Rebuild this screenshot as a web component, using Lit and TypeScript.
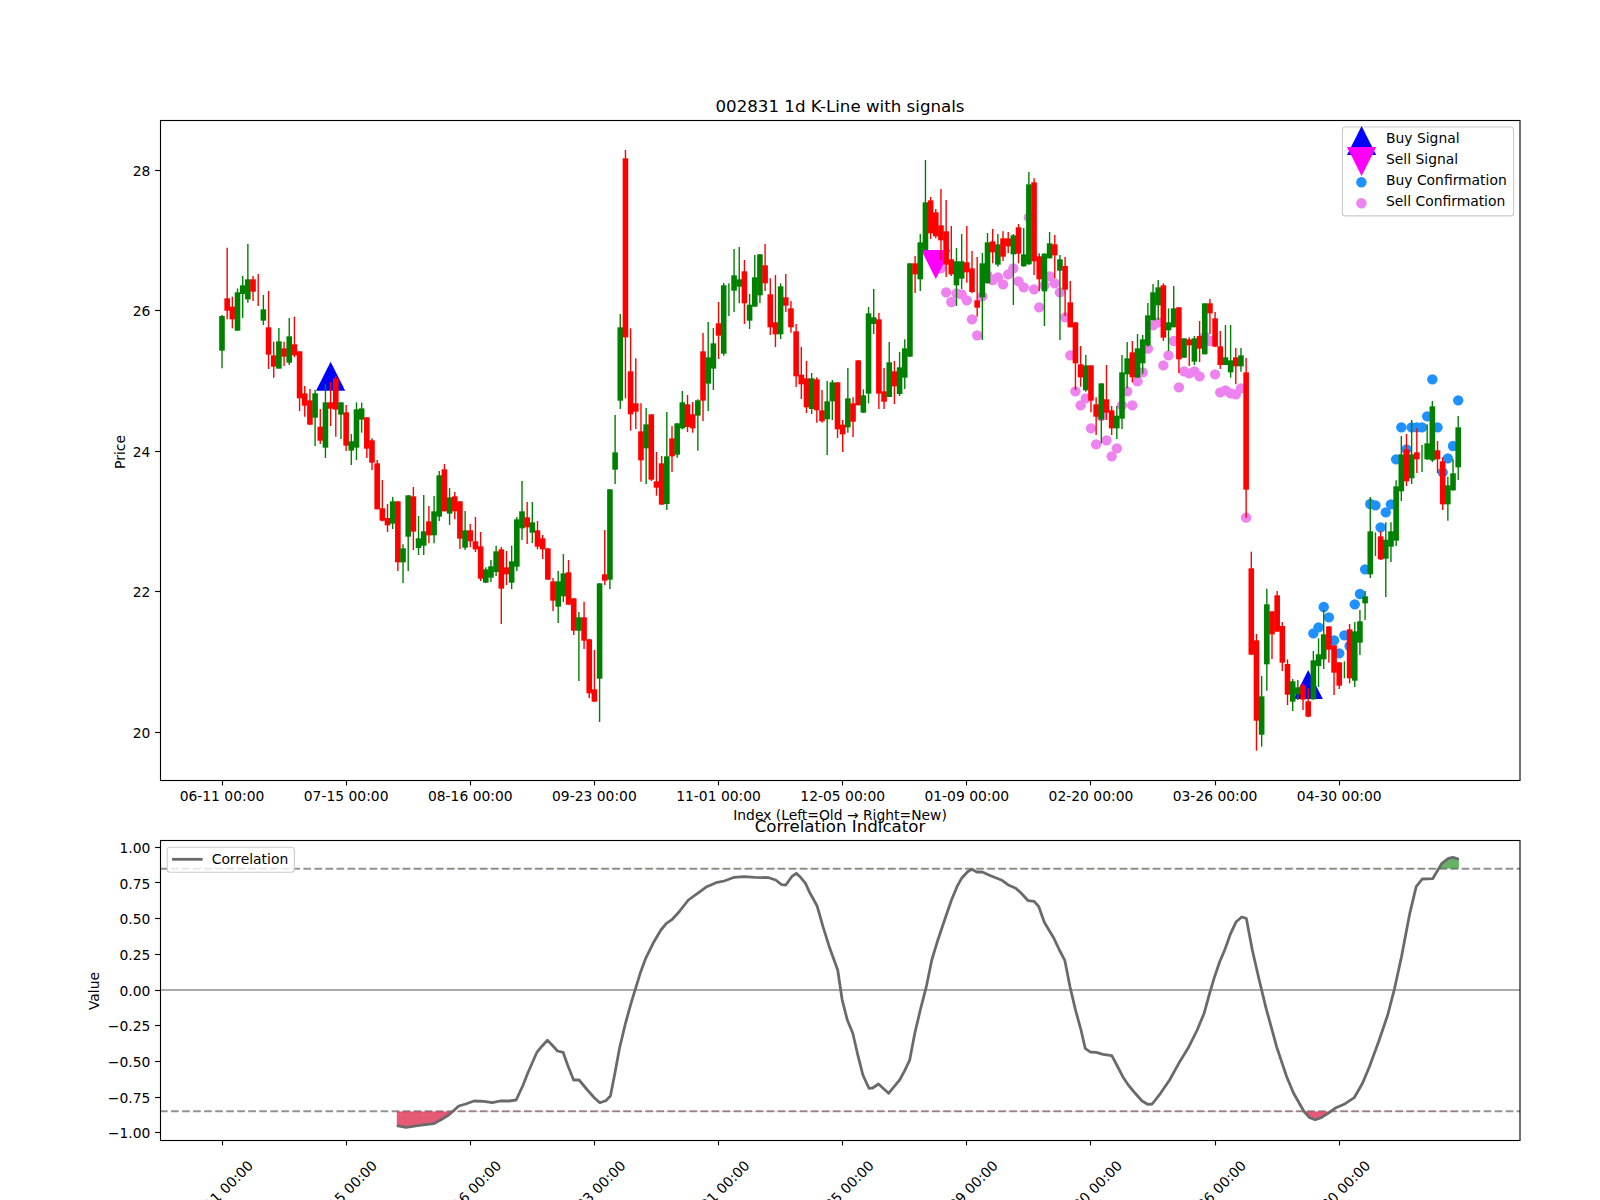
import { LitElement, html, css, svg } from "lit";
import { customElement } from "lit/decorators.js";

// Candles read as: colour, wick top, body top, body bottom, wick bottom (0 0 = no body). Grouped by y-origin.
const SEGS: [number, string][] = [
  [90, `g 675 678 782 835,r 473 625 662 688,r 620 650 688 715,g 595 607 722 722,g 558 586 612 684,g 462 568 628 638,r 558 568 605 633,r 552 0 0 648,g 615 658 692 705,r 603 712 794 837,r 755 796 830 863,g 714 754 836 835,r 755 775 800 828,g 684 739 818 825,r 680 763 796 802,r 784 784 925 963,r 888 910 947 980,r 897 931 1004 1005,g 900 910 983 1068,r 957 1010 1052 1062,g 882 937 1073 1104,r 876 937 956 1008,r 858 865 959 1040,g 937 937 974 1047,r 945 967 1067 1083,g 1032 1054 1082 1125,g 937 958 1073 1110,g 938 955 989 1028,r 982 982 1076 1104,r 1045 1051 1118 1140`],
  [400, `r 180 190 328 328,r 240 325 362 364,r 312 354 376 396,g 291 304 371 387,r 304 304 487 513,g 433 445 487 549,g 286 286 410 513,r 261 289 395 450,g 348 415 444 465,g 285 394 437 465,r 318 364 406 430,g 288 334 406 430,g 213 226 350 363,r 192 208 334 334,g 264 292 341 375,r 276 289 334 358,r 304 304 416 447,g 333 391 443 450,r 372 391 424 442,r 351 424 448 456,r 396 439 536 543,g 502 508 548 549,g 480 499 533 546,g 437 454 516 528,r 441 448 566 672,r 453 502 523 555,g 437 484 548 567,g 351 358 500 513,g 243 334 385 420,r 306 352 382 432,g 306 367 398 429,r 363 391 440 448,r 405 415 448 477,r 445 445 539 540,r 534 544 602 633,g 513 544 620 669,g 462 520 589 606,r 480 517 614 614,r 595 595 692 705,g 636 652 692 843,r 605 652 722 747,r 716 718 880 894,r 750 868 905 905,g 550 550 836 966,r 390 523 542 555,g 268 268 539 567`],
  [130, `g 855 967 1019 1062,g 552 592 812 837,r 60 85 622 805,r 595 724 853 902,r 685 820 845 897,r 820 904 991 1055,g 834 883 955 1062,r 853 853 1049 1053,r 966 1054 1073 1097,r 978 1000 1124 1124,g 846 979 1122 1140,r 888 925 979 1026,g 880 880 974 983,g 783 817 895 898,r 795 823 891 906,r 816 853 895 908,g 808 811 857 962,r 609 664 812 873,g 576 682 761 843,g 594 640 716 780,r 516 580 617 687,g 459 466 671 677,g 460 0 0 558,g 357 436 482 546,g 351 448 470 520,r 390 424 520 582,g 492 524 572 597,g 375 442 530 530,g 372 373 496 519,r 342 406 460 483,r 445 493 592 615,r 435 577 613 651,g 460 469 613 627,r 432 502 527 546,r 513 535 592 608,r 582 604 739 771,r 651 734 763 807,r 693 745 832 849,g 729 745 837 852,r 742 748 841 878,r 780 841 874 878,g 753 814 868 975,g 750 757 814 870,r 757 757 898 924,r 870 884 913 966,g 714 805 892 908,r 802 820 875 921,r 691 691 826 826,g 778 796 848 849,g 531 550 791 820,g 477 562 582 612,r 549 568 791 837,r 714 784 815 837,g 636 697 801 801,r 693 724 769 822,g 666 712 792 798,g 628 655 743 777,g 400 400 680 680,r 378 400 433 489,g 312 337 448 483,g 90 217 360 360,r 201 211 310 327,r 237 247 319 325,r 177 286 331 390,r 210 304 404 441,r 288 388 433 438,g 354 394 466 528,g 312 394 446 477,r 288 397 427 458,r 363 415 486 490,r 381 511 533 560,g 369 400 502 630,g 309 337 460 460,r 297 334 367 400,g 312 343 404 410,r 304 325 380 393,r 306 325 349 370,g 312 316 373 525,r 282 292 371 400,g 294 373 409 410,g 126 163 403 404,r 145 157 394 435,r 370 379 448 483,g 370 371 484 588,g 306 340 385 385,r 315 343 376 445,g 375 388 422 630,r 381 408 479 558,r 453 517 592 592,r 577 577 700 780,r 648 703 742 770,g 675 706 781 785,r 706 706 812 847,r 802 823 860 915,g 760 760 869 940,r 705 808 848 870,r 828 841 895 915,g 828 857 895 927,g 675 727 866 897,g 636 685 733 775,r 633 667 742 757,g 612 655 743 743,g 615 628 700 731,g 519 556 646 650,g 462 487 571 570,g 450 472 526 570,r 460 466 623 633,g 535 577 601 663,g 468 535 592 592,r 531 532 688 729,g 625 625 683 684,r 622 628 646 708,g 618 625 695 705,r 573 618 656 696,g 520 520 673 673,r 507 520 550 612,r 546 565 650 651,r 603 649 705 717,g 585 682 705 705,g 585 691 727 743,r 654 682 709 763,g 654 676 709 725,r 684 727 1079 1163`],
  [360, `r 575 625 884 884,r 822 841 1082 1172,g 948 1009 1124 1160,g 686 733 913 992,r 754 754 823 897,r 693 706 815 815,r 786 798 908 933,r 898 912 1004 1035,g 957 964 1025 1053,g 960 982 1003 1020,r 970 976 1019 1050,r 985 1024 1070 1072,g 873 901 1018 1019,g 835 883 918 981,g 750 823 898 927,r 800 799 869 908,r 856 856 938 1005,r 906 907 977 987,g 904 0 0 955,r 792 808 955 970,g 786 814 962 981,g 750 784 848 885,g 693 709 730 780,g 411 514 643 654,g 517 0 0 588,r 514 529 598 600,g 487 539 596 711,g 487 514 560 606,g 361 379 542 558,g 228 283 394 423,r 222 268 364 378,g 180 283 355 372,r 205 277 298 339,g 255 0 0 336,g 193 250 298 300,g 123 139 301 306,r 243 271 298 339,r 292 304 433 450,g 350 376 433 482,g 298 340 391 392,g 168 202 322 360`],
];

const X0 = 222, DX = 5.1724;
const xi = (i: number) => X0 + DX * i;
const snap = (v: number) => Math.round(v - 0.5) + 0.5;

type Candle = { i: number; red: boolean; wt: number; bt: number; bb: number; wb: number };
const CANDLES: Candle[] = [];
for (const [off, s] of SEGS) {
  for (const row of s.split(",")) {
    const p = row.trim().split(" ");
    const n = p.slice(1).map(Number);
    CANDLES.push({
      i: CANDLES.length,
      red: p[0] === "r",
      wt: off + n[0] / 3,
      bt: n[1] ? off + n[1] / 3 : 0,
      bb: n[2] ? off + n[2] / 3 : 0,
      wb: off + n[3] / 3,
    });
  }
}

const SELL_DOTS = `415 487 516 490 493 511 568 616 499 436 450 442 463 433 415 454 472 262 478 532 466 439 460 487 562 676 784 826 805 895 943 858 931 979 955 826 784 826 754 727 656 586 577 706 676 633 772 724 730 724 739 620 633 733 787 781 790 793 775 1163`
  .split(" ").map((v, k) => [xi(139 + k), 130 + Number(v) / 3]);
const BUY_DOTS = `820 802 741 772 841 880 826 858 733 702 628 432 436 502 457 433 298 202 268 202 202 202 169 58 202 337 295 258 121`
  .split(" ").map((v, k) => [xi(211 + k), 360 + Number(v) / 3]);

const L1 = `690,977 710,982 735,977 770,971 785,960 803,945 825,918 840,912 858,903 880,904 898,908 915,903 935,903 950,900 965,855 975,820 995,757 1005,740 1018,721 1030,738 1040,753 1052,757 1062,795 1075,840 1087,840 1105,870 1120,893 1132,908 1145,902 1155,888 1165,820 1175,745 1188,670 1200,610 1210,565 1220,520 1232,475 1248,430 1265,390 1277,370 1290,358 1305,335 1325,300 1345,280 1365,260 1385,248 1403,243 1425,232 1445,230 1470,232 1500,233 1515,240 1528,254 1537,255 1550,230 1560,220`;
const L2 = `0,230 12,250 22,280 37,317 50,380 65,445 82,510 92,600 103,660 115,700 125,760 137,825 150,865 158,864 171,852 193,880 205,860 217,840 228,812 239,780 250,700 262,630 275,560 287,480 298,430 315,360 330,300 342,260 352,235 365,215 374,208 385,216 397,216 415,227 440,241 455,256 470,265 482,280 497,302 510,304 520,320 532,367 553,415 565,450 577,482 588,560 600,630 612,690 621,745 632,756 645,757 660,763 679,767 690,795 703,830 715,855 730,880 745,903 757,913 767,912 785,880 805,840 825,790 845,745 865,690 880,640 892,580 903,530 914,485 925,450 938,400 950,365 962,351 972,355 985,450 1000,540 1015,625 1038,740 1060,830 1075,880 1097,933 1110,953 1122,959 1135,953 1150,940 1165,925 1185,913 1207,893 1225,850 1240,800 1260,725 1280,645 1295,565 1310,470 1328,340 1342,260 1355,237 1378,236 1398,190 1412,175 1422,172 1435,178`;
const conv = (s: string, ox: number) =>
  s.split(" ").map((p) => {
    const [a, b] = p.split(",").map(Number);
    return [ox + a / 2.1778, 800 + b / 3];
  });
const LINE = [...conv(L1, 80), ...conv(L2, 800)];
const pts = (a: number[][]) => a.map((p) => `${p[0].toFixed(1)},${p[1].toFixed(1)}`).join(" ");
const closed = (y: number) => pts([[LINE[0][0], y], ...LINE, [LINE[LINE.length - 1][0], y]]);

const TICK_LABELS = ["06-11", "07-15", "08-16", "09-23", "11-01", "12-05", "01-09", "02-20", "03-26", "04-30"];
const PRICE_TICKS = [[28, 170.4], [26, 310.9], [24, 451.3], [22, 591.8], [20, 732.3]];
const VAL_TICKS = ["1.00", "0.75", "0.50", "0.25", "0.00", "−0.25", "−0.50", "−0.75", "−1.00"];
const VY = (k: number) => 847.3 + k * 35.68;

@customElement("app-root")
export class AppRoot extends LitElement {
  static styles = css`
    :host { display: block; width: 1600px; height: 1200px; background: #fff; overflow: hidden; }
    svg { display: block; }
    text { font-family: "DejaVu Sans", sans-serif; font-size: 13.89px; fill: #000; }
    .title { font-size: 16.67px; }
    .frame { fill: none; stroke: #000; stroke-width: 1.11; }
    .tick { stroke: #000; stroke-width: 1.11; }
    .wick { stroke-width: 1.4; }
    .r { stroke: #ff0000; }
    .g { stroke: #008000; }
    .rf { fill: #ff0000; }
    .gf { fill: #008000; }
    .buy { fill: #0000ff; }
    .sell { fill: #ff00ff; }
    .bd { fill: #1e90ff; }
    .sd { fill: #ee82ee; }
    .legend { fill: #fff; fill-opacity: 0.8; stroke: #ccc; stroke-width: 1.11; }
    .thr { stroke: #929292; stroke-width: 2.08; stroke-dasharray: 7.7 3.33; }
    .zero { stroke: #aaaaaa; stroke-width: 2.08; }
    .corr { fill: none; stroke: #6a6a6a; stroke-width: 2.78; stroke-linejoin: round; }
    .fr { fill: #dc143c; fill-opacity: 0.7; }
    .fg { fill: #008000; fill-opacity: 0.6; }
    .corr-key { stroke: #6a6a6a; stroke-width: 2.78; }
  `;

  private triUp(x: number, base: number) {
    return svg`<polygon class="buy" points="${x - 14.6},${base} ${x + 14.6},${base} ${x},${base - 29}"></polygon>`;
  }
  private triDown(x: number, top: number) {
    return svg`<polygon class="sell" points="${x - 14.6},${top} ${x + 14.6},${top} ${x},${top + 29}"></polygon>`;
  }

  private priceChart() {
    return svg`
      ${SELL_DOTS.map((d) => svg`<circle class="sd" cx="${d[0]}" cy="${d[1]}" r="5.2"></circle>`)}
      ${BUY_DOTS.map((d) => svg`<circle class="bd" cx="${d[0]}" cy="${d[1]}" r="5.2"></circle>`)}
      ${this.triUp(xi(21), 390.7)}
      ${this.triUp(xi(210), 699)}
      ${this.triDown(xi(138), 250)}
      ${CANDLES.map((c) => {
        const x = xi(c.i);
        return svg`
          <line class="wick ${c.red ? "r" : "g"}" x1="${x}" x2="${x}" y1="${c.wt}" y2="${c.wb}"></line>
          ${c.bt ? svg`<rect class="${c.red ? "rf" : "gf"}" x="${x - 2.8}" y="${c.bt}" width="5.6" height="${c.bb - c.bt}"></rect>` : ""}
        `;
      })}
      <rect class="frame" x="160.5" y="120.5" width="1359.5" height="660"></rect>
      ${PRICE_TICKS.map((t) => svg`
        <line class="tick" x1="155.1" x2="160" y1="${snap(t[1])}" y2="${snap(t[1])}"></line>
        <text x="150.3" y="${t[1] + 5.2}" text-anchor="end">${t[0]}</text>`)}
      ${TICK_LABELS.map((l, k) => {
        const x = xi(k * 24);
        return svg`
          <line class="tick" x1="${snap(x)}" x2="${snap(x)}" y1="781" y2="785.4"></line>
          <text x="${x}" y="800.5" text-anchor="middle">${l} 00:00</text>`;
      })}
      <text class="title" x="840" y="112" text-anchor="middle">002831 1d K-Line with signals</text>
      <text x="840" y="820" text-anchor="middle">Index (Left=Old → Right=New)</text>
      <text x="0" y="0" text-anchor="middle" transform="translate(124.5 452) rotate(-90)">Price</text>
      <rect class="legend" x="1342.4" y="127" width="171.2" height="88.9" rx="3"></rect>
      ${this.triUp(1361.6, 155)}
      ${this.triDown(1361.6, 147)}
      <circle class="bd" cx="1361.4" cy="182.3" r="5.2"></circle>
      <circle class="sd" cx="1361.4" cy="203.3" r="5.2"></circle>
      <text x="1386" y="143">Buy Signal</text>
      <text x="1386" y="164">Sell Signal</text>
      <text x="1386" y="185">Buy Confirmation</text>
      <text x="1386" y="206">Sell Confirmation</text>
    `;
  }

  private corrChart() {
    return svg`
      <defs>
        <clipPath id="below"><rect x="160" y="1111.3" width="1360" height="28"></rect></clipPath>
        <clipPath id="above"><rect x="160" y="840" width="1360" height="28.7"></rect></clipPath>
      </defs>
      <line class="zero" x1="160" x2="1520" y1="990" y2="990"></line>
      <line class="thr" x1="160" x2="1520" y1="868.7" y2="868.7"></line>
      <line class="thr" x1="160" x2="1520" y1="1111.3" y2="1111.3"></line>
      <polygon class="fr" clip-path="url(#below)" points="${closed(1111.3)}"></polygon>
      <polygon class="fg" clip-path="url(#above)" points="${closed(868.7)}"></polygon>
      <polyline class="corr" points="${pts(LINE)}"></polyline>
      <rect class="frame" x="160.5" y="840.5" width="1359.5" height="300"></rect>
      ${VAL_TICKS.map((l, k) => svg`
        <line class="tick" x1="155.1" x2="160" y1="${snap(VY(k))}" y2="${snap(VY(k))}"></line>
        <text x="150.3" y="${VY(k) + 5.6}" text-anchor="end">${l}</text>`)}
      ${TICK_LABELS.map((l, k) => {
        const x = xi(k * 24);
        return svg`
          <line class="tick" x1="${snap(x)}" x2="${snap(x)}" y1="1141" y2="1145.4"></line>
          <text text-anchor="middle" transform="translate(${x + 2} 1196.5) rotate(-45)">${l} 00:00</text>`;
      })}
      <text class="title" x="840" y="832" text-anchor="middle">Correlation Indicator</text>
      <text text-anchor="middle" transform="translate(99 991) rotate(-90)">Value</text>
      <rect class="legend" x="167.2" y="847.3" width="127.2" height="25" rx="3"></rect>
      <line class="corr-key" x1="172" x2="202.6" y1="859.3" y2="859.3"></line>
      <text x="211.7" y="864">Correlation</text>
    `;
  }

  render() {
    return html`<svg width="1600" height="1200" viewBox="0 0 1600 1200" role="img" aria-label="002831 K-line chart">
      ${this.priceChart()}${this.corrChart()}
    </svg>`;
  }
}
